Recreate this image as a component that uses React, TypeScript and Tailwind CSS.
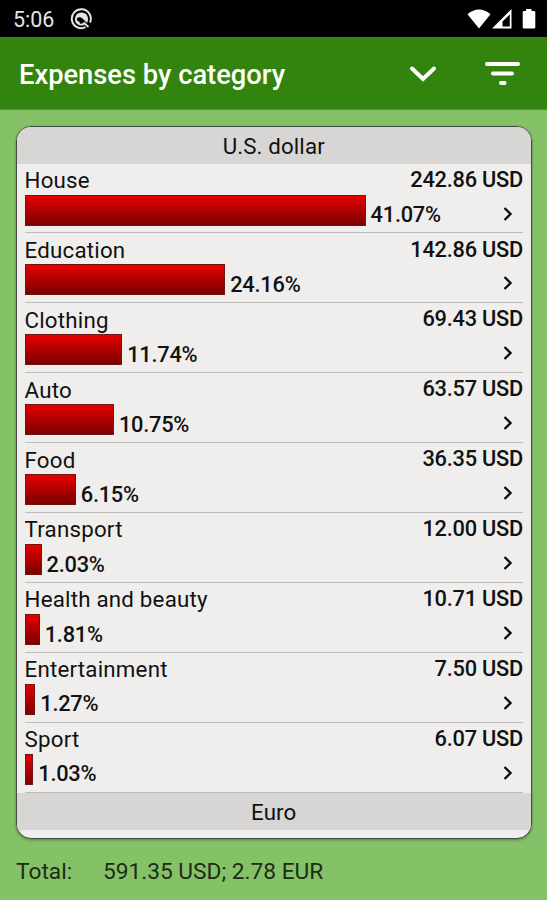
type Category = {
  name: string;
  amount: string;
  percent: number;
};

const CATEGORIES: Category[] = [
  { name: "House", amount: "242.86 USD", percent: 41.07 },
  { name: "Education", amount: "142.86 USD", percent: 24.16 },
  { name: "Clothing", amount: "69.43 USD", percent: 11.74 },
  { name: "Auto", amount: "63.57 USD", percent: 10.75 },
  { name: "Food", amount: "36.35 USD", percent: 6.15 },
  { name: "Transport", amount: "12.00 USD", percent: 2.03 },
  { name: "Health and beauty", amount: "10.71 USD", percent: 1.81 },
  { name: "Entertainment", amount: "7.50 USD", percent: 1.27 },
  { name: "Sport", amount: "6.07 USD", percent: 1.03 },
];

const PX_PER_PERCENT = 8.3;

function StatusBar() {
  return (
    <div className="flex h-[37px] items-center bg-black pl-[13px] pr-[11px] text-[#e4e4e4]">
      <span className="w-[57px] pt-[2px] text-[21.5px] leading-none">5:06</span>
      <svg width="23" height="22" viewBox="0 0 23 22" fill="none">
        <path d="M15.5 19.2A9.5 9.5 0 1 1 20 14.5" stroke="currentColor" strokeWidth="2" />
        <circle cx="11.5" cy="11" r="6.6" fill="currentColor" />
        <path d="M7 10l3-1 2.500 1.500L19 17l-2 2.500-4.500-4.500-2 1-1.500-2.500-2-1z" fill="#000" />
        <path d="M13.5 14.5l5 4.5" stroke="currentColor" strokeWidth="1.8" />
      </svg>
      <div className="ml-auto flex items-center text-white">
        <svg width="24" height="20" viewBox="0 0 24 20" fill="currentColor">
          <path d="M.5 5.2Q12-4 23.5 5.2L12 19.5z" />
        </svg>
        <svg className="ml-px" width="21" height="20" viewBox="0 0 21 20">
          <path d="M19.5 0v19.5H0z" fill="currentColor" />
          <path d="M17.8 5.500v12h-7.300v-5z" fill="#000" />
        </svg>
        <svg className="ml-[9px]" width="14" height="20" viewBox="0 0 14 20" fill="currentColor">
          <path d="M4 0h5.5v2H12q1.300 0 1.300 1.300v14.900q0 1.300-1.300 1.300H2q-1.300 0-1.300-1.300V3.300Q.7 2 2 2h2z" />
        </svg>
      </div>
    </div>
  );
}

function Toolbar() {
  return (
    <header className="flex h-[73px] items-center border-b border-[#4d9a34] bg-[#33830f] pl-[19px] pr-[27px] text-white">
      <h1 className="pt-[5px] text-[27.3px] font-medium leading-none">Expenses by category</h1>
      <svg className="ml-auto mt-[2px]" width="28" height="18" viewBox="0 0 28 18" fill="none">
        <path d="M3 3.5l11 10.5L25 3.5" stroke="currentColor" strokeWidth="4" strokeLinecap="round" />
      </svg>
      <svg className="ml-[48px] mt-[2px]" width="35" height="24" viewBox="0 0 35 24" fill="none">
        <path d="M2 2h31M8 11.5h19M16 21h3.5" stroke="currentColor" strokeWidth="4" strokeLinecap="round" />
      </svg>
    </header>
  );
}

function CategoryRow({ name, amount, percent }: Category) {
  return (
    <li className="mx-2 flex h-[69.9px] flex-col border-b border-[#bdbcba]">
      <div className="flex h-[31px] items-center justify-between pt-px">
        <span className="pt-px text-[22.3px] font-[450] tracking-[0.22px]">{name}</span>
        <span className="text-[21.8px] font-medium tracking-[-0.24px]">{amount}</span>
      </div>
      <div className="flex h-[31px] items-center">
        <div
          className="h-[31px] shrink-0 border border-[#701512] bg-linear-to-b from-[#e80000] to-[#7c0000]"
          style={{ width: percent * PX_PER_PERCENT + 0.2 }}
        />
        <span className="ml-[5px] pt-[10px] text-[21.8px] font-medium tracking-[-0.24px]">{percent.toFixed(2)}%</span>
        <svg className="ml-auto mr-[9px] mt-[7px]" width="12" height="16" viewBox="0 0 12 16" fill="none">
          <path d="M2.5 2l6 6-6 6" stroke="#111" strokeWidth="2.4" />
        </svg>
      </div>
    </li>
  );
}

function CurrencyHeader({ label }: { label: string }) {
  return (
    <h2 className="flex h-[37px] items-center justify-center bg-[#d7d6d4] pt-[2px] text-[22.3px] tracking-[0.13px]">
      {label}
    </h2>
  );
}

export default function App() {
  return (
    <div className="flex h-[900px] w-[547px] flex-col overflow-hidden bg-[#85c267] font-['Roboto',sans-serif] text-[22px] leading-none text-[#111]">
      <StatusBar />
      <Toolbar />
      <main className="ml-[15.5px] mr-[15px] mt-[15.6px] h-[713px] overflow-hidden rounded-[15px] border-[1.5px] border-[#454a43] bg-[#efeeec] shadow-[0_1px_3px_rgba(0,0,0,0.35)]">
        <CurrencyHeader label="U.S. dollar" />
        <ul>
          {CATEGORIES.map((category) => (
            <CategoryRow key={category.name} {...category} />
          ))}
        </ul>
        <CurrencyHeader label="Euro" />
      </main>
      <footer className="mt-[22.4px] flex px-4 text-[22.7px] text-[#1e2c17]">
        <span className="w-[87px]">Total:</span>
        <span>591.35 USD; 2.78 EUR</span>
      </footer>
    </div>
  );
}
